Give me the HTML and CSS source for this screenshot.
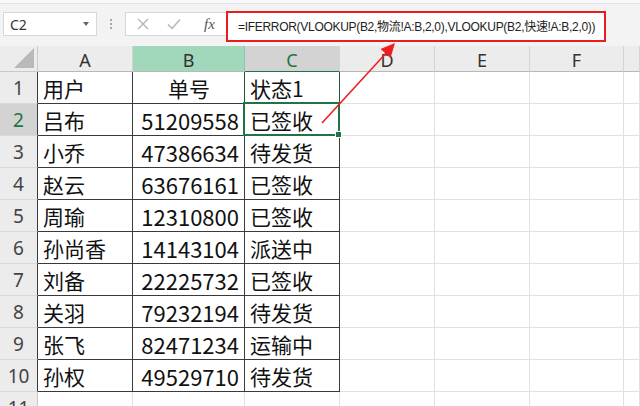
FILE: index.html
```html
<!DOCTYPE html>
<html lang="zh">
<head>
<meta charset="utf-8">
<link rel="stylesheet" href="styles.css">
</head>
<body>
<div class="app">
  <div class="topstrip"></div>
  <div class="toolbar">
    <div class="namebox"><span>C2</span><span class="caret"></span></div>
    <div class="grip"><i></i><i></i><i></i></div>
    <div class="fnbox">
      <svg class="ic" width="14" height="14" viewBox="0 0 14 14"><path d="M2 2L12 12M12 2L2 12" stroke="#b5b5b5" stroke-width="1.4" fill="none"/></svg>
      <svg class="ic" width="16" height="14" viewBox="0 0 16 14"><path d="M2 7.5L6 11.5L14 2.5" stroke="#b5b5b5" stroke-width="1.5" fill="none"/></svg>
      <span class="fx">fx</span>
    </div>
    <div class="formula">=IFERROR(VLOOKUP(B2,物流!A:B,2,0),VLOOKUP(B2,快速!A:B,2,0))</div>
  </div>
  <div class="sheet">
    <div class="corner"><span class="tri"></span></div>
    <div class="ch">A</div>
    <div class="ch chb">B</div>
    <div class="ch chsel">C</div>
    <div class="ch">D</div>
    <div class="ch">E</div>
    <div class="ch">F</div>
    <div class="ch"></div>

    <div class="rh rt">1</div>
    <div class="c t">用户</div>
    <div class="c t tb center">单号</div>
    <div class="c t tc c1">状态1</div>
    <div class="c"></div><div class="c"></div><div class="c"></div><div class="c"></div>

    <div class="rh rt rsel">2</div>
    <div class="c t">吕布</div>
    <div class="c t tb num">51209558</div>
    <div class="c t tc sel">已签收</div>
    <div class="c"></div><div class="c"></div><div class="c"></div><div class="c"></div>

    <div class="rh rt">3</div>
    <div class="c t">小乔</div>
    <div class="c t tb num">47386634</div>
    <div class="c t tc">待发货</div>
    <div class="c"></div><div class="c"></div><div class="c"></div><div class="c"></div>

    <div class="rh rt">4</div>
    <div class="c t">赵云</div>
    <div class="c t tb num">63676161</div>
    <div class="c t tc">已签收</div>
    <div class="c"></div><div class="c"></div><div class="c"></div><div class="c"></div>

    <div class="rh rt">5</div>
    <div class="c t">周瑜</div>
    <div class="c t tb num">12310800</div>
    <div class="c t tc">已签收</div>
    <div class="c"></div><div class="c"></div><div class="c"></div><div class="c"></div>

    <div class="rh rt">6</div>
    <div class="c t">孙尚香</div>
    <div class="c t tb num">14143104</div>
    <div class="c t tc">派送中</div>
    <div class="c"></div><div class="c"></div><div class="c"></div><div class="c"></div>

    <div class="rh rt">7</div>
    <div class="c t">刘备</div>
    <div class="c t tb num">22225732</div>
    <div class="c t tc">已签收</div>
    <div class="c"></div><div class="c"></div><div class="c"></div><div class="c"></div>

    <div class="rh rt">8</div>
    <div class="c t">关羽</div>
    <div class="c t tb num">79232194</div>
    <div class="c t tc">待发货</div>
    <div class="c"></div><div class="c"></div><div class="c"></div><div class="c"></div>

    <div class="rh rt">9</div>
    <div class="c t">张飞</div>
    <div class="c t tb num">82471234</div>
    <div class="c t tc">运输中</div>
    <div class="c"></div><div class="c"></div><div class="c"></div><div class="c"></div>

    <div class="rh rt">10</div>
    <div class="c t">孙权</div>
    <div class="c t tb num">49529710</div>
    <div class="c t tc">待发货</div>
    <div class="c"></div><div class="c"></div><div class="c"></div><div class="c"></div>

    <div class="rh">11</div>
    <div class="c"></div><div class="c"></div><div class="c"></div>
    <div class="c"></div><div class="c"></div><div class="c"></div><div class="c"></div>
  </div>
  <svg class="arrow" width="640" height="406" viewBox="0 0 640 406">
    <line x1="322" y1="123" x2="388" y2="51" stroke="#f01e1e" stroke-width="1.6"/>
    <polygon points="395,43 390.5,58 380.5,49" fill="#f01e1e"/>
  </svg>
</div>
</body>
</html>
```
FILE: styles.css
```css
* { box-sizing: border-box; }
html, body { margin: 0; padding: 0; }
body {
  width: 640px;
  height: 406px;
  overflow: hidden;
  background: #ffffff;
  font-family: "Noto Sans", "Noto Sans CJK SC", sans-serif;
}
.app { position: relative; width: 640px; height: 406px; overflow: hidden; }
.topstrip { height: 4px; background: #f8f8f8; border-bottom: 1px solid #e2e2e2; }
.toolbar {
  height: 42px;
  background: #f3f3f3;
  display: flex;
  align-items: flex-start;
  padding: 7px 0 0 3px;
}
.namebox {
  width: 94px;
  height: 24px;
  margin-top: 1px;
  background: #fff;
  border: 1px solid #d8d8d8;
  display: flex;
  align-items: center;
  justify-content: space-between;
  padding: 0 7px 0 6px;
  font-size: 14px;
  color: #333;
}
.caret {
  width: 0; height: 0;
  border-left: 3.5px solid transparent;
  border-right: 3.5px solid transparent;
  border-top: 4px solid #666;
}
.grip {
  width: 28px;
  height: 24px;
  margin-top: 1px;
  display: flex;
  flex-direction: column;
  align-items: center;
  justify-content: center;
  gap: 2px;
}
.grip i { width: 2px; height: 2px; background: #a8a8a8; display: block; }
.fnbox {
  width: 101px;
  height: 24px;
  margin-top: 1px;
  background: #fff;
  border: 1px solid #d8d8d8;
  border-right: none;
  display: flex;
  align-items: center;
  padding-left: 10px;
  gap: 16px;
}
.fx {
  font-family: "Liberation Serif", serif;
  font-style: italic;
  font-size: 15px;
  color: #555;
  margin-left: 6px;
}
.formula {
  width: 380px;
  height: 31px;
  background: #fff;
  border: 2px solid #ea1d1d;
  padding: 0 0 2px 10px;
  display: flex;
  align-items: center;
  font-family: "Liberation Sans", "Noto Sans CJK SC", sans-serif;
  font-size: 12px;
  letter-spacing: -0.3px;
  color: #222;
  white-space: nowrap;
  overflow: hidden;
}
.sheet {
  display: grid;
  grid-template-columns: 38px 95px 112px 95px 95px 95px 94px 16px;
  grid-template-rows: 26px repeat(11, 32px);
  background: #fff;
}
.corner {
  background: #ececec;
  border-right: 1px solid #c9c9c9;
  border-bottom: 1px solid #c9c9c9;
  position: relative;
}
.tri {
  position: absolute;
  right: 3px;
  bottom: 3px;
  width: 0; height: 0;
  border-left: 20px solid transparent;
  border-bottom: 20px solid #b9b9b9;
}
.ch {
  background: #ececec;
  border-right: 1px solid #d4d4d4;
  border-bottom: 1px solid #b8b8b8;
  display: flex;
  align-items: center;
  justify-content: center;
  font-size: 18px;
  color: #333;
  padding-top: 2px;
}
.chb { background: #a1d8bb; border-right-color: #8fc6a8; }
.chsel { background: #d3d3d3; color: #217346; border-bottom: 1px solid #217346; }
.rh {
  background: #ececec;
  border-right: 1px solid #c9c9c9;
  border-bottom: 1px solid #d9d9d9;
  display: flex;
  align-items: center;
  justify-content: center;
  font-size: 19px;
  color: #444;
}
.rh.rt { border-right: 1px solid #3a3a3a; }
.rh.rsel { background: #d3d3d3; color: #217346; }
.c {
  border-right: 1px solid #e1e1e1;
  border-bottom: 1px solid #e1e1e1;
  display: flex;
  align-items: center;
  font-family: "Noto Sans CJK SC", sans-serif;
  font-size: 21px;
  color: #111;
  padding: 0 4px 0 5px;
  white-space: nowrap;
}
.c.t { border-right-color: #3a3a3a; border-bottom-color: #3a3a3a; }
.center { justify-content: center; }
.num { justify-content: flex-end; padding-right: 5px; font-size: 22px; }
.c.c1 { border-right-color: #1f5a38; border-bottom-color: #217346; }
.tb.center { border-right-color: #1f5a38; }
.sel { position: relative; }
.sel::after {
  content: "";
  position: absolute;
  left: -2px; top: -2px; right: -1px; bottom: -1px;
  border: 2px solid #217346;
}
.sel::before {
  content: "";
  position: absolute;
  right: -3px; bottom: -3px;
  width: 5px; height: 5px;
  background: #217346;
  border: 1px solid #fff;
  z-index: 2;
}
.arrow { position: absolute; left: 0; top: 0; pointer-events: none; }
```
